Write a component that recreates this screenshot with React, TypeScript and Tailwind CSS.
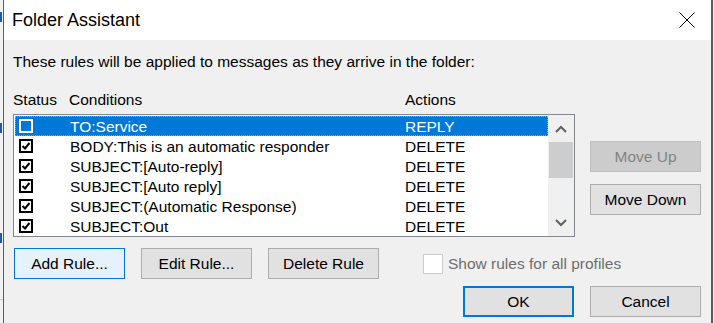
import React from "react";

const rules = [
  { checked: false, condition: "TO:Service", action: "REPLY" },
  { checked: true, condition: "BODY:This is an automatic responder", action: "DELETE" },
  { checked: true, condition: "SUBJECT:[Auto-reply]", action: "DELETE" },
  { checked: true, condition: "SUBJECT:[Auto reply]", action: "DELETE" },
  { checked: true, condition: "SUBJECT:(Automatic Response)", action: "DELETE" },
  { checked: true, condition: "SUBJECT:Out", action: "DELETE" },
];

const RowCheck = ({ checked, selected }: { checked: boolean; selected: boolean }) => (
  <svg width="14" height="14" viewBox="0 0 14 14" className="shrink-0">
    <rect
      x="1"
      y="1"
      width="12"
      height="12"
      fill={selected ? "none" : "#ffffff"}
      stroke={selected ? "#ffffff" : "#000000"}
      strokeWidth="2"
    />
    {checked && (
      <path d="M3.5 7 L6 9.5 L10.5 4" fill="none" stroke="#000000" strokeWidth="2" />
    )}
  </svg>
);

const Chevron = ({ up }: { up?: boolean }) => (
  <svg width="12" height="8" viewBox="0 0 12 8">
    <path
      d={up ? "M1 7 L6 2 L11 7" : "M1 1 L6 6 L11 1"}
      fill="none"
      stroke="#606060"
      strokeWidth="2"
    />
  </svg>
);

type BtnKind = "normal" | "hover" | "default" | "disabled";

const Button = ({ label, kind = "normal" }: { label: string; kind?: BtnKind }) => {
  const styles: Record<BtnKind, string> = {
    normal: "bg-[#e1e1e1] border border-[#adadad] text-black",
    hover: "bg-[#e5f1fb] border border-[#0078d7] text-black",
    default: "bg-[#e1e1e1] border-2 border-[#0078d7] text-black",
    disabled: "bg-[#cccccc] border border-[#bfbfbf] text-[#838383]",
  };
  return (
    <div
      className={`w-[111px] h-[31px] shrink-0 flex items-center justify-center text-[15.5px] ${styles[kind]}`}
    >
      {label}
    </div>
  );
};

export default function App() {
  return (
    <div
      className="w-[714px] h-[323px] flex overflow-hidden bg-[#f0f0f0] text-black"
      style={{ fontFamily: '"Liberation Sans", Arial, sans-serif' }}
    >
      {/* background window peeking at the left */}
      <div className="w-[3px] shrink-0 flex flex-col bg-[#f2f2f2]">
        <div className="mt-[12px] w-[2px] h-[10px] bg-[#1f5aa8]" />
        <div className="mt-[101px] w-[2px] h-[10px] bg-[#1f5aa8]" />
        <div className="mt-[100px] w-[2px] h-[10px] bg-[#1f5aa8]" />
        <div className="mt-[56px] h-px bg-[#c8c8c8]" />
      </div>

      {/* Dialog */}
      <div className="w-[710px] shrink-0 flex flex-col border-l border-r-2 border-[#5c5c5c]">
        {/* Title bar */}
        <div className="h-[40px] shrink-0 bg-white flex items-center justify-between pl-[8px] pr-[16px]">
          <span className="text-[18px]">Folder Assistant</span>
          <svg width="16" height="16" viewBox="0 0 16 16">
            <path d="M0.5 0.5 L15.5 15.5 M15.5 0.5 L0.5 15.5" stroke="#000000" strokeWidth="1" />
          </svg>
        </div>

        {/* Body */}
        <div className="flex-1 bg-[#f0f0f0] pl-[9px] text-[15.5px]">
          <div className="mt-[12px] h-[20px] leading-[20px]">
            These rules will be applied to messages as they arrive in the folder:
          </div>

          {/* Column headers */}
          <div className="mt-[18px] h-[20px] leading-[20px] flex">
            <span className="w-[56px]">Status</span>
            <span className="w-[336px]">Conditions</span>
            <span>Actions</span>
          </div>

          {/* List + side buttons */}
          <div className="mt-[4px] flex gap-[15px]">
            <div className="w-[562px] h-[123px] border border-[#828790] bg-white flex">
              <div className="flex-1 pl-[1px] pt-[1px] flex flex-col">
                {rules.map((r, i) => {
                  const selected = i === 0;
                  return (
                    <div
                      key={i}
                      className={`h-[20px] flex items-center pl-[4px] leading-[20px] ${
                        selected
                          ? "bg-[#0078d7] text-white outline-1 outline-dotted outline-[#ff8c1a] -outline-offset-1"
                          : ""
                      }`}
                    >
                      <RowCheck checked={r.checked} selected={selected} />
                      <span className="ml-[37px] w-[335px] whitespace-nowrap pt-[1px]">{r.condition}</span>
                      <span className="pt-[1px]">{r.action}</span>
                    </div>
                  );
                })}
              </div>

              {/* Scrollbar */}
              <div className="w-[26px] shrink-0 bg-[#f0f0f0] flex flex-col">
                <div className="h-[27px] flex items-center justify-center">
                  <Chevron up />
                </div>
                <div className="mx-[1px] h-[36px] bg-[#cdcdcd]" />
                <div className="flex-1" />
                <div className="h-[26px] flex items-center justify-center">
                  <Chevron />
                </div>
              </div>
            </div>

            <div className="flex flex-col pt-[27px] gap-[12px]">
              <Button label="Move Up" kind="disabled" />
              <Button label="Move Down" />
            </div>
          </div>

          {/* Rule buttons */}
          <div className="mt-[11px] flex items-center">
            <div className="ml-[1px] flex gap-[16px]">
              <Button label="Add Rule..." kind="hover" />
              <Button label="Edit Rule..." />
              <Button label="Delete Rule" />
            </div>
            <div className="ml-[44px] flex items-center gap-[5px] text-[#6d6d6d]">
              <div className="w-[20px] h-[20px] bg-white border border-[#cccccc]" />
              <span>Show rules for all profiles</span>
            </div>
          </div>

          {/* OK / Cancel */}
          <div className="mt-[7px] flex justify-end gap-[16px] pr-[10px]">
            <Button label="OK" kind="default" />
            <Button label="Cancel" />
          </div>
        </div>
      </div>

      <div className="flex-1 bg-[#e8e8e8]" />
    </div>
  );
}
